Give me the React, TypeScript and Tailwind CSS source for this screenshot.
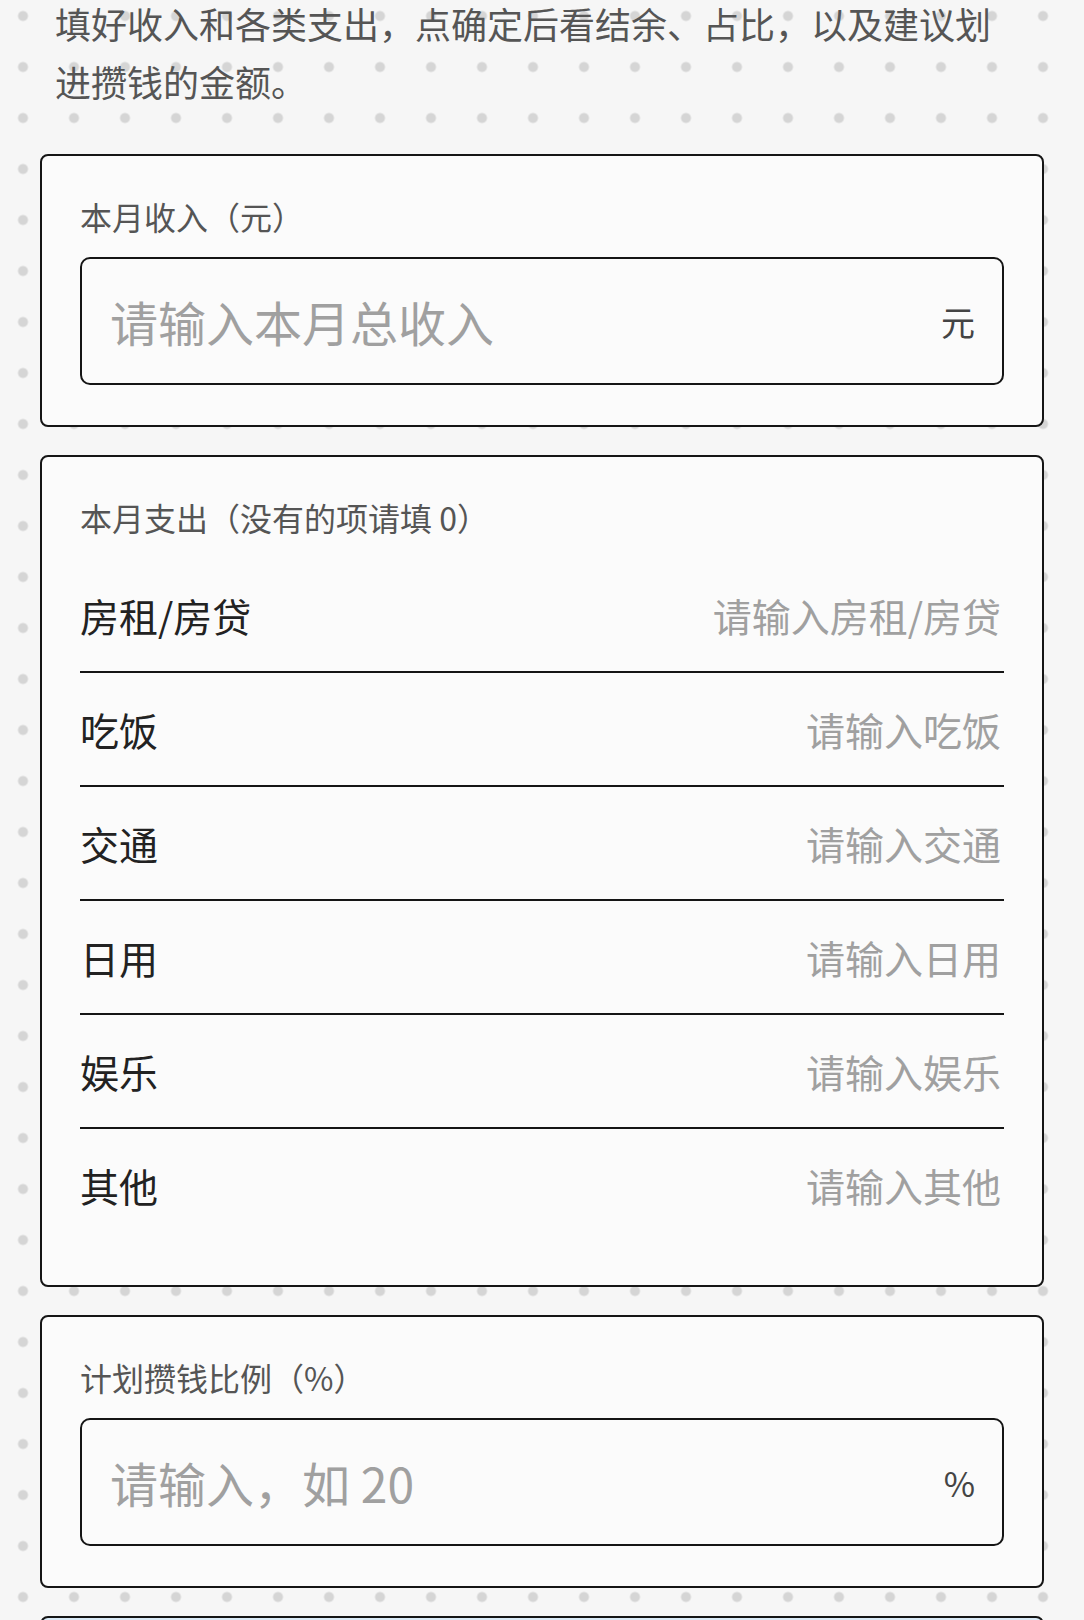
import React from "react";

const rows = ["房租/房贷", "吃饭", "交通", "日用", "娱乐", "其他"];

function BigInput({ placeholder, unit }: { placeholder: string; unit: string }) {
  return (
    <div className="mt-[21px] flex h-[128px] items-center rounded-[10px] border-2 border-[#151515] pl-[28px] pr-[27px]">
      <input
        type="text"
        placeholder={placeholder}
        className="min-w-0 flex-1 bg-transparent text-[48px] text-[#222] outline-none placeholder:text-[#a0a0a0]"
      />
      <span className="text-[34px] text-[#444]">{unit}</span>
    </div>
  );
}

export default function App() {
  return (
    <div className="min-h-screen overflow-hidden bg-[#f6f6f6] bg-[radial-gradient(circle,#d5d5d5_4.6px,transparent_5.4px)] bg-[length:51px_51px] bg-[position:-2.5px_-9.5px] pb-[40px] font-['Noto_Sans_CJK_SC','Noto_Sans',sans-serif]">
      <p className="-mt-[6px] pl-[55px] pr-[75px] text-[36px] leading-[58px] text-[#555]">
        填好收入和各类支出，点确定后看结余、占比，以及建议划进攒钱的金额。
      </p>

      <div className="mx-[40px] mt-[44px] flex flex-col gap-[28px]">
        <section className="rounded-[8px] border-2 border-[#151515] bg-[#fbfbfb] px-[38px] pb-[40px] pt-[40px]">
          <div className="text-[32px] leading-[40px] text-[#555]">本月收入（元）</div>
          <BigInput placeholder="请输入本月总收入" unit="元" />
        </section>

        <section className="rounded-[8px] border-2 border-[#151515] bg-[#fbfbfb] px-[38px] pb-[44px] pt-[40px]">
          <div className="text-[32px] leading-[40px] text-[#555]">本月支出（没有的项请填 0）</div>
          <div className="mt-[22px] flex flex-col">
            {rows.map((r) => (
              <div
                key={r}
                className="flex h-[114px] items-center justify-between border-b-2 border-[#151515] last:h-[112px] last:border-b-0"
              >
                <span className="text-[39px] text-[#222]">{r}</span>
                <input
                  type="text"
                  placeholder={"请输入" + r}
                  className="w-[60%] bg-transparent pr-[3px] text-right text-[39px] text-[#222] outline-none placeholder:text-[#a0a0a0]"
                />
              </div>
            ))}
          </div>
        </section>

        <section className="rounded-[8px] border-2 border-[#151515] bg-[#fbfbfb] px-[38px] pb-[40px] pt-[40px]">
          <div className="text-[32px] leading-[40px] text-[#555]">计划攒钱比例（%）</div>
          <BigInput placeholder="请输入，如 20" unit="%" />
        </section>

        <section className="h-[140px] rounded-[8px] border-2 border-[#151515] bg-[#d8e9f6]"></section>
      </div>
    </div>
  );
}
